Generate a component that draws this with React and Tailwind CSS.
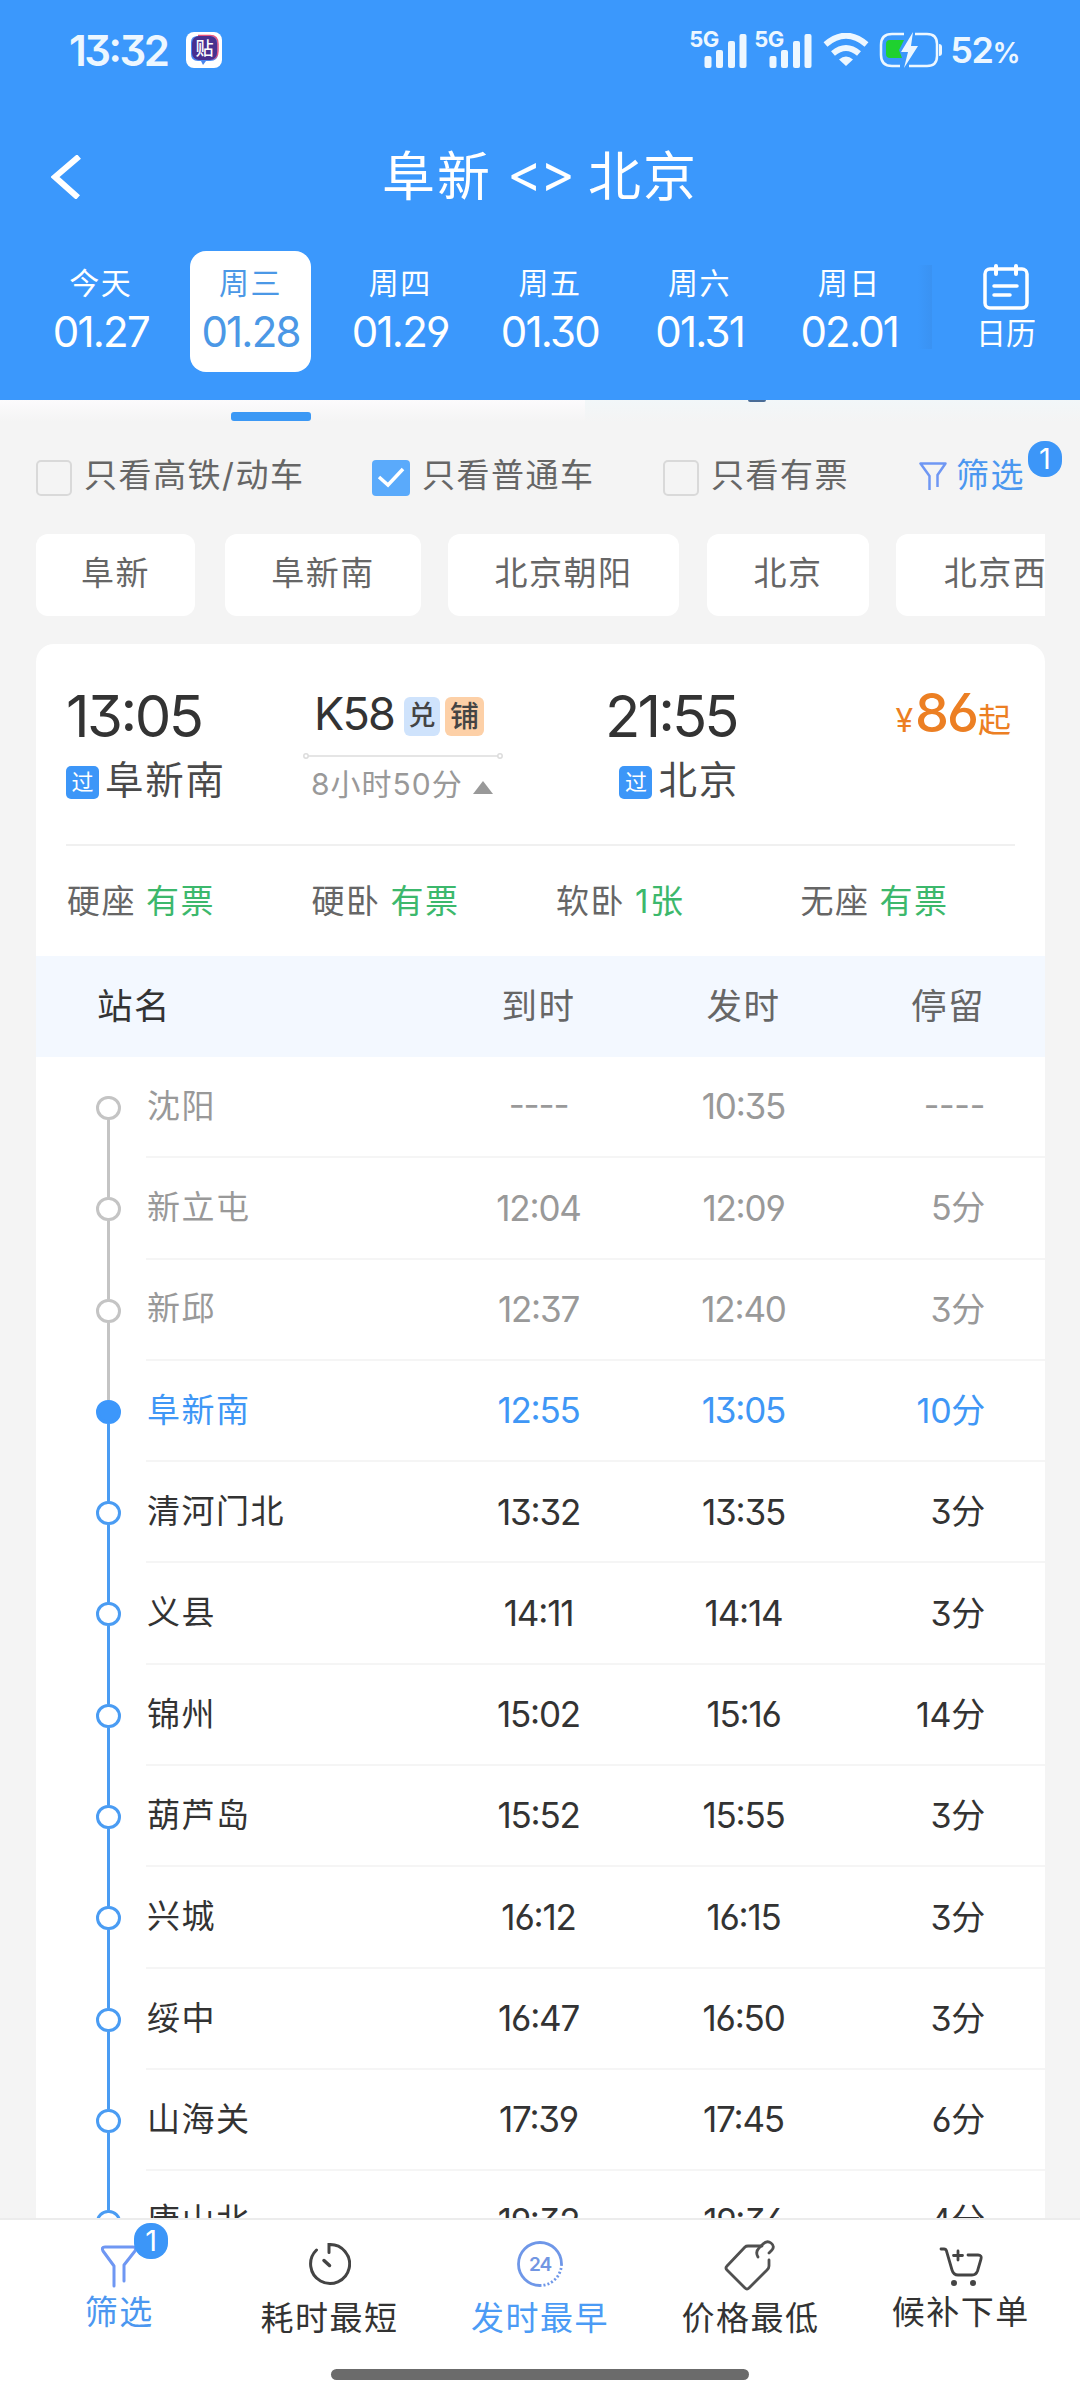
const dates = [
  { day: '今天', date: '01.27' },
  { day: '周三', date: '01.28', active: true },
  { day: '周四', date: '01.29' },
  { day: '周五', date: '01.30' },
  { day: '周六', date: '01.31' },
  { day: '周日', date: '02.01' },
];

const chips = [
  { name: '阜新', cls: 'w-[159px] mr-[30px]' },
  { name: '阜新南', cls: 'w-[196px] mr-[27px]' },
  { name: '北京朝阳', cls: 'w-[231px] mr-[28px]' },
  { name: '北京', cls: 'w-[162px] mr-[27px]' },
  { name: '北京西', cls: 'w-[199px]' },
];

const seats = [
  { type: '硬座', left: '有票' },
  { type: '硬卧', left: '有票' },
  { type: '软卧', left: '1张' },
  { type: '无座', left: '有票' },
];

// state: past = before boarding, board = boarding station, next = on the way
const stops = [
  { name: '沈阳', arrive: '----', depart: '10:35', stay: '----', state: 'past' },
  { name: '新立屯', arrive: '12:04', depart: '12:09', stay: '5分', state: 'past' },
  { name: '新邱', arrive: '12:37', depart: '12:40', stay: '3分', state: 'past' },
  { name: '阜新南', arrive: '12:55', depart: '13:05', stay: '10分', state: 'board' },
  { name: '清河门北', arrive: '13:32', depart: '13:35', stay: '3分', state: 'next' },
  { name: '义县', arrive: '14:11', depart: '14:14', stay: '3分', state: 'next' },
  { name: '锦州', arrive: '15:02', depart: '15:16', stay: '14分', state: 'next' },
  { name: '葫芦岛', arrive: '15:52', depart: '15:55', stay: '3分', state: 'next' },
  { name: '兴城', arrive: '16:12', depart: '16:15', stay: '3分', state: 'next' },
  { name: '绥中', arrive: '16:47', depart: '16:50', stay: '3分', state: 'next' },
  { name: '山海关', arrive: '17:39', depart: '17:45', stay: '6分', state: 'next' },
  { name: '唐山北', arrive: '19:32', depart: '19:36', stay: '4分', state: 'next' },
];

const textColor = {
  past: 'text-[#999999]',
  board: 'text-[#3f97f6]',
  next: 'text-[#333333]',
};

const dotColor = {
  past: 'border-[#c4c4c4] bg-white',
  board: 'border-[#3c97fb] bg-[#3c97fb]',
  next: 'border-[#4a9cf3] bg-white',
};

function Signal() {
  return (
    <div className="relative h-[40px] w-[58px]">
      <span className="absolute left-0 top-0 text-[22px] leading-[22px] font-bold tracking-[-0.500px]">5G</span>
      <svg className="absolute left-[15px] top-[6px]" width="43" height="34" viewBox="0 0 43 34" fill="currentColor">
        <rect x="0.5" y="22" width="7" height="12" rx="2" />
        <rect x="12" y="16" width="7" height="18" rx="2" />
        <rect x="24" y="7" width="7" height="27" rx="2" />
        <rect x="35.5" y="0" width="7" height="34" rx="2" />
      </svg>
    </div>
  );
}

function StatusBar() {
  return (
    <div className="flex h-[100px] items-center pl-[69px] pr-[61px] text-[#edf7ff]">
      <span className="w-[117px] text-[42px] font-semibold tracking-[-2.500px]">13:32</span>
      <svg width="36" height="36" viewBox="0 0 36 36">
        <rect width="36" height="36" rx="8" fill="#fff" />
        <path d="M5 10Q5 4 12 4h12q8 0 8 8v9q0 8-8 8h-4l-3 4-2-4h-3q-7 0-7-7z" fill="#4a86ee" />
        <path d="M12 3.500h12q8 0 8 8.500v7q0 8-8 8" fill="none" stroke="#e5537f" strokeWidth="1.500" />
        <rect x="6" y="4" width="25" height="24" rx="7" fill="#49308f" />
        <text x="18.500" y="22.500" fontSize="18" fontWeight="500" textAnchor="middle" fill="#fff">贴</text>
      </svg>
      <div className="ml-auto flex items-center">
        <div className="-mt-[5px] mr-[7px]"><Signal /></div>
        <div className="-mt-[5px]"><Signal /></div>
        <svg className="ml-[11px] mt-[-1px]" width="46" height="34" viewBox="0 0 46 34" fill="none" stroke="currentColor">
          <path d="M2.500 11.500Q23-6 43.500 11.500" strokeWidth="6" />
          <path d="M10 20.500q13-11 26 0" strokeWidth="6" />
          <path d="M23 33l-7-6.500q7-6 14 0z" fill="currentColor" stroke="none" />
        </svg>
        <svg className="ml-[10px]" width="64" height="36" viewBox="0 0 64 36">
          <path d="M25 2H13Q2 2 2 13v10q0 11 11 11h8M36 2h12q10 0 10 10v12q0 10-10 10H30" fill="none" stroke="currentColor" strokeWidth="2.500" />
          <path d="M60 12q3 0 3 3v6q0 3-3 3z" fill="currentColor" />
          <path d="M11 8h14l-5 10 3 8H11q-4 0-4-4V12q0-4 4-4z" fill="#1fd12f" />
          <path d="M34 0L22 20h7l-4 16 14-22h-7z" fill="currentColor" />
        </svg>
        <span className="ml-[7px] text-[36px] font-semibold tracking-[-1.500px]">
          52<span className="text-[28px]">%</span>
        </span>
      </div>
    </div>
  );
}

function DateBar() {
  return (
    <div className="flex h-[121px]">
      <div className="flex pl-[26px]">
        {dates.map((d) => (
          <div key={d.date} className="flex w-[149.700px] justify-center">
            <div
              className={`flex h-[121px] w-[121px] flex-col items-center rounded-[16px] pt-[14px] ${
                d.active ? 'bg-white text-[#4b98e6]' : 'text-white'
              }`}
            >
              <span className="text-[30px] leading-[36px] tracking-[1.500px]">{d.day}</span>
              <span className="mt-[5px] text-[42px] leading-[52px] tracking-[-1.800px]">{d.date}</span>
            </div>
          </div>
        ))}
      </div>
      <div className="mt-[14px] h-[84px] w-[14px] -ml-[6px] bg-gradient-to-r from-[#3b98fc] to-[#3a92f2]" />
      <div className="ml-auto flex w-[58px] mr-[45px] flex-col items-center text-white">
        <svg className="mt-[13px]" width="46" height="46" viewBox="0 0 46 46" fill="none" stroke="currentColor" strokeWidth="3.500" strokeLinecap="round">
          <rect x="2" y="5" width="42" height="39" rx="5" />
          <path d="M13 2v8M33 2v8" strokeWidth="4" />
          <path d="M11 22h23M11 31h16" />
        </svg>
        <span className="mt-[5px] text-[30px] leading-[36px] whitespace-nowrap">日历</span>
      </div>
    </div>
  );
}

function Checkbox({ checked }) {
  if (checked) {
    return (
      <svg width="38" height="36" viewBox="0 0 38 36">
        <rect width="38" height="36" rx="4" fill="#5aaafb" />
        <path d="M7 17l9 8 15-16" fill="none" stroke="#fff" strokeWidth="3.500" />
      </svg>
    );
  }
  return <div className="h-[36px] w-[36px] rounded-[5px] border-2 border-[#d9d9d9]" />;
}

function Badge() {
  return (
    <span className="flex h-[36px] w-[34px] items-center justify-center rounded-[16px] bg-[#3c96f8] text-[29px] text-white">
      1
    </span>
  );
}

function Filters() {
  return (
    <div className="flex h-[112px] items-center pb-[5px] pl-[36px] text-[33px] tracking-[1.500px] text-[#666666]">
      <div className="flex w-[336px] items-center">
        <div className="mt-[5px]"><Checkbox /></div>
        <span className="ml-[12px]">只看高铁/动车</span>
      </div>
      <div className="flex w-[291px] items-center">
        <div className="mt-[5px]"><Checkbox checked /></div>
        <span className="ml-[12px]">只看普通车</span>
      </div>
      <div className="flex w-[256px] items-center">
        <div className="mt-[5px]"><Checkbox /></div>
        <span className="ml-[12px]">只看有票</span>
      </div>
      <div className="relative flex items-center text-[#4b97f0]">
        <svg width="28" height="30" viewBox="0 0 28 30" fill="none" stroke="#6f97f3" strokeWidth="2.500" strokeLinejoin="round">
          <path d="M10.500 29V15L1.500 2.500h25L18.500 14v12" />
        </svg>
        <span className="ml-[9px]">筛选</span>
        <div className="absolute -top-[10px] left-[109px] tracking-normal"><Badge /></div>
      </div>
    </div>
  );
}

function Through() {
  return (
    <span className="mt-[2px] flex h-[33px] w-[33px] items-center justify-center rounded-[5px] bg-[#3c96f8] text-[22px] text-white">
      过
    </span>
  );
}

function TrainSummary() {
  return (
    <div className="h-[312px] px-[30px]">
      <div className="flex h-[202px] border-b-2 border-[#f0f0f0] pt-[39px]">
        <div className="w-[237px]">
          <div className="text-[58px] leading-[66px] tracking-[-2.500px] text-[#333333]">13:05</div>
          <div className="mt-[4px] flex h-[56px] items-center">
            <Through />
            <span className="ml-[6px] text-[38.500px] tracking-[1.800px] text-[#4a4a4a]">阜新南</span>
          </div>
        </div>
        <div className="w-[200px]">
          <div className="flex h-[66px] items-center pl-[11px]">
            <span className="-mt-[4px] w-[90px] text-[45px] tracking-[-1.800px] text-[#333333]">K58</span>
            <span className="mt-[1px] flex h-[39px] w-[36px] items-center justify-center rounded-[6px] bg-[#cfe3fc] text-[27px] font-medium text-[#444]">兑</span>
            <span className="ml-[5px] mt-[1px] flex h-[39px] w-[39px] items-center justify-center rounded-[6px] bg-[#fdd0a7] text-[29px] font-medium text-[#444]">铺</span>
          </div>
          <svg className="mt-[4px]" width="200" height="6" viewBox="0 0 200 6" fill="none" stroke="#dcdcdc" strokeWidth="1.500">
            <circle cx="3" cy="3" r="2.200" />
            <path d="M5 3h190" />
            <circle cx="197" cy="3" r="2.200" />
          </svg>
          <div className="mt-[5px] flex h-[40px] items-center pl-[8px] text-[30px] tracking-[1px] text-[#999999]">
            <span className="w-[162px] whitespace-nowrap">8小时50分</span>
            <svg className="mt-[7px]" width="20" height="13" viewBox="0 0 20 13"><path d="M10 0l10 13H0z" fill="#999" /></svg>
          </div>
        </div>
        <div className="ml-[102px] flex w-[134px] flex-col items-end">
          <div className="self-start text-[58px] leading-[66px] tracking-[-2.900px] text-[#333333]">21:55</div>
          <div className="mt-[4px] flex h-[56px] items-center">
            <Through />
            <span className="ml-[6px] text-[38.500px] tracking-[1.800px] text-[#4a4a4a]">北京</span>
          </div>
        </div>
        <div className="ml-auto mr-[4px] flex h-[66px] items-baseline text-[#ec7f23]">
          <span className="mr-[2px] text-[32px]">¥</span>
          <span className="text-[54px] font-medium leading-[60px] tracking-[-2px]">86</span>
          <span className="ml-[1px] text-[33px]">起</span>
        </div>
      </div>
      <div className="flex h-[110px] items-center pl-[1px] pt-[1px] text-[33px] tracking-[1.500px] text-[#666666]">
        {seats.map((s) => (
          <div key={s.type} className="w-[244.500px] shrink-0">
            {s.type}
            <span className="ml-[10px] text-[#3cb86c]">{s.left}</span>
          </div>
        ))}
      </div>
    </div>
  );
}

function Stop({ stop, first }) {
  const lineTop = stop.state === 'next' ? 'bg-[#4a9cf3]' : 'bg-[#c4c4c4]';
  const lineBottom = stop.state === 'past' ? 'bg-[#c4c4c4]' : 'bg-[#4a9cf3]';
  return (
    <div className={`flex h-[101.300px] text-[33px] ${textColor[stop.state]}`}>
      <div className="ml-[60px] flex w-[25px] shrink-0 flex-col items-center">
        <div className={`h-[39px] w-[3px] shrink-0 ${first ? 'bg-transparent' : lineTop}`} />
        <div className={`h-[24px] w-[25px] shrink-0 rounded-full border-3 ${dotColor[stop.state]}`} />
        <div className={`w-[3px] flex-1 ${lineBottom}`} />
      </div>
      <div className="ml-[25px] flex flex-1 items-center border-b-2 border-[#f5f5f5]">
        <span className="w-[290px] pl-[1px] tracking-[1.500px]">{stop.name}</span>
        <span className="w-[205px] text-center text-[35px] tracking-[-1.200px]">{stop.arrive}</span>
        <span className="w-[205px] text-center text-[35px] tracking-[-1.200px]">{stop.depart}</span>
        <span className="ml-auto pr-[60px] text-right text-[34px] tracking-[-0.300px]">{stop.stay}</span>
      </div>
    </div>
  );
}

function BottomBar() {
  const tab = 'flex flex-1 flex-col items-center whitespace-nowrap text-[33px] leading-[40px] tracking-[1.500px]';
  return (
    <div className="h-[182px] border-t-2 border-[#ececec] bg-white">
      <div className="flex h-[149px] px-[14px] text-[#333333]">
        <div className={`${tab} text-[#4b97f0]`}>
          <div className="relative mt-[25px]">
            <svg width="38" height="44" viewBox="0 0 38 44" fill="none" stroke="#6f97f3" strokeWidth="3" strokeLinejoin="round" strokeLinecap="round">
              <path d="M14 41V21L3 6Q1 2 5 2h28q4 0 2 4L24 20v16" />
            </svg>
            <div className="absolute -top-[22px] left-[34px] tracking-normal"><Badge /></div>
          </div>
          <span className="mt-[3px]">筛选</span>
        </div>
        <div className={tab}>
          <svg className="mt-[22px] -ml-[2px]" width="44" height="44" viewBox="0 0 44 44" fill="none" stroke="#444" strokeWidth="3" strokeLinecap="round">
            <path d="M9.500 8A19.500 19.500 0 1 0 22 2.500v8" />
            <path d="M17 18.500l5.500 5" strokeWidth="3.500" />
          </svg>
          <span className="mt-[12px]">耗时最短</span>
        </div>
        <div className={`${tab} text-[#4b9bf5]`}>
          <svg className="mt-[21px]" width="46" height="46" viewBox="0 0 46 46" fill="none" stroke="#6f97e8" strokeWidth="2.800">
            <path d="M23 44.500A21.500 21.500 0 1 1 44.500 23" />
            <path d="M44.500 23A21.500 21.500 0 0 1 23 44.500" strokeDasharray="2 2" />
            <text x="23" y="30" fontSize="19" fontWeight="600" textAnchor="middle" fill="#7296e2" stroke="none" letterSpacing="-1">24</text>
          </svg>
          <span className="mt-[11px]">发时最早</span>
        </div>
        <div className={tab}>
          <svg className="mt-[19px]" width="52" height="53" viewBox="0 0 52 53" fill="none" stroke="#505050" strokeWidth="2.800" strokeLinecap="round" strokeLinejoin="round">
            <path d="M38 7H24q-2 0-3 1L3 27q-2 2 0 4l18 18q2 2 4 0l18-18q2-2 2-4v-6" />
            <path d="M34 18q-3-5 1-9l4-4q4-4 8-1t1 7l-3 3" />
          </svg>
          <span className="mt-[6px]">价格最低</span>
        </div>
        <div className={tab}>
          <svg className="mt-[27px]" width="44" height="42" viewBox="0 0 44 42" fill="none" stroke="#444" strokeWidth="2.800" strokeLinecap="round" strokeLinejoin="round">
            <path d="M2 2h3q2 0 2.500 2L13 23q1.500 5 6 5h14q4 0 5.500-4L42 12q1-4-3-4H29" />
            <path d="M19 4v9M14.500 8.500h9" />
            <circle cx="15" cy="36" r="1.600" fill="#444" />
            <circle cx="34" cy="36" r="1.600" fill="#444" />
          </svg>
          <span className="mt-[3px]">候补下单</span>
        </div>
      </div>
      <div className="mx-auto h-[11px] w-[418px] rounded-full bg-[#6b6b6b]" />
    </div>
  );
}

export default function App() {
  return (
    <div
      lang="zh-CN"
      className="flex h-[2400px] w-[1080px] flex-col overflow-hidden bg-[#f4f4f4] font-['Inter','Noto_Sans_CJK_SC',sans-serif] [font-feature-settings:'cv03','cv04','cv09','case']"
    >
      <header className="h-[400px] shrink-0 bg-[#3b98fc]">
        <StatusBar />
        <div className="relative flex h-[151px] items-center justify-center pt-[5px] text-white">
          <svg className="absolute left-[51px] top-[55px]" width="31" height="44" viewBox="0 0 31 44" fill="none" stroke="currentColor" strokeWidth="6">
            <path d="M28 1.500L4 22l23 20.500" />
          </svg>
          <h1 className="text-[53px] tracking-[2px] [word-spacing:-2px]">
            阜新 <span className="tracking-[-2px]">&lt;&gt;</span> 北京
          </h1>
        </div>
        <DateBar />
      </header>

      <main className="h-[1818px] overflow-hidden">
        {/* lower edge of the tab strip that is scrolled under the header */}
        <div className="flex h-[22px]">
          <div className="w-[585px] bg-gradient-to-b from-[#fcfbfd] to-[#f4f4f4] pl-[231px] pt-[12px]">
            <div className="h-[9px] w-[80px] rounded-[3px] bg-[#3b98f5]" />
          </div>
          <div className="flex-1 bg-gradient-to-b from-[#f2f7f9] to-[#f4f4f4] pl-[163px]">
            <div className="h-[2px] w-[18px] rounded-b-full bg-[#4a6c96]" />
          </div>
        </div>
        <Filters />
        <div className="ml-[36px] mr-[35px] flex h-[82px] overflow-hidden">
          {chips.map((c) => (
            <div
              key={c.name}
              className={`flex shrink-0 items-center justify-center rounded-[12px] bg-white pb-[2px] text-[33px] tracking-[1.500px] text-[#666666] ${c.cls}`}
            >
              {c.name}
            </div>
          ))}
        </div>

        <section className="ml-[36px] mr-[35px] mt-[28px] rounded-t-[18px] bg-white">
          <TrainSummary />
          <div className="flex h-[101px] items-center bg-[#f3f8ff] pl-[60px] pt-[1px] text-[35.500px] tracking-[1.500px] text-[#666666]">
            <span className="w-[340px] pl-[1px] text-[#333333]">站名</span>
            <span className="w-[205px] text-center">到时</span>
            <span className="w-[205px] text-center">发时</span>
            <span className="ml-auto pr-[60px]">停留</span>
          </div>
          {stops.map((s, i) => (
            <Stop key={s.name} stop={s} first={i === 0} />
          ))}
        </section>
      </main>

      <BottomBar />
    </div>
  );
}
